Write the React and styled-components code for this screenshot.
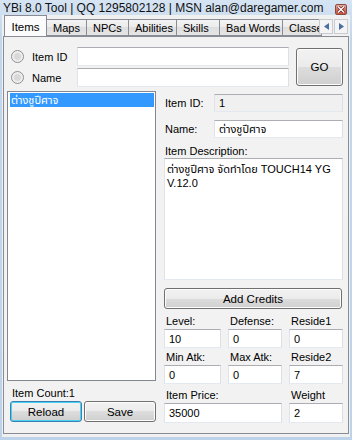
import React from 'react'
import styled, { createGlobalStyle } from 'styled-components'

const Global = createGlobalStyle`
  html, body { margin: 0; padding: 0; }
  body {
    width: 352px;
    height: 440px;
    overflow: hidden;
    font-family: "Liberation Sans", "Noto Sans", "Noto Sans Thai", "DejaVu Sans", sans-serif;
    font-size: 11px;
    color: #000;
  }
  * { box-sizing: border-box; }
`

const Window = styled.div`
  width: 352px;
  height: 440px;
  background: linear-gradient(#d6e4f3, #c2d7ec 40px, #bdd3ea);
  padding: 0 2px 3px 2px;
  display: flex;
  flex-direction: column;
`

const TitleBar = styled.div`
  height: 15px;
  display: flex;
  align-items: center;
  justify-content: space-between;
  padding-left: 1px;
  font-size: 12px;
  color: #111;
  white-space: nowrap;
`

const CloseBtn = styled.div`
  width: 12px;
  height: 11px;
  margin-right: 3px;
  margin-top: 3px;
  border: 1px solid #8a4a44;
  border-radius: 2px;
  background: linear-gradient(#e9a99c, #d46b5c 55%, #c9553f);
  display: flex;
  align-items: center;
  justify-content: center;
`

const Client = styled.div`
  flex: 1;
  background: #f0f0f0;
  padding: 0 1px 3px 1px;
  display: flex;
  flex-direction: column;
`

const TabStrip = styled.div`
  position: relative;
  height: 21px;
  display: flex;
  align-items: flex-end;
  padding-left: 2px;
  overflow: hidden;
  z-index: 1;
`

const Tab = styled.div`
  flex: 0 0 ${p => p.$w}px;
  height: ${p => (p.$active ? 22 : 17)}px;
  margin-bottom: ${p => (p.$active ? -1 : 0)}px;
  border: 1px solid #898c95;
  border-bottom: ${p => (p.$active ? 'none' : '1px solid #898c95')};
  margin-left: -1px;
  background: ${p => (p.$active ? '#fbfbfb' : 'linear-gradient(#f3f3f3, #ebebeb 50%, #dedede 50%, #e6e6e6)')};
  display: flex;
  align-items: center;
  justify-content: ${p => (p.$active ? 'center' : 'flex-start')};
  padding: 0 0 0 ${p => (p.$active ? 0 : 6)}px;
  font-size: ${p => (p.$active ? 11.5 : 11)}px;
  white-space: nowrap;
  overflow: hidden;
  position: relative;
  z-index: ${p => (p.$active ? 2 : 1)};
`

const Scroller = styled.div`
  position: absolute;
  right: 1px;
  top: 4px;
  display: flex;
  gap: 1px;
  z-index: 3;
`

const ScrollBtn = styled.div`
  width: 14px;
  height: 15px;
  border: 1px solid #c8ccd2;
  background: #f4f4f4;
  display: flex;
  align-items: center;
  justify-content: center;
`

const Panel = styled.div`
  flex: 1;
  border: 1px solid #898c95;
  background: #f2f2f2;
  padding: 10px 5px 0 3px;
  display: flex;
  flex-direction: column;
`

const TopRow = styled.div`
  display: flex;
  padding-left: 4px;
`

const SearchRows = styled.div`
  display: flex;
  flex-direction: column;
  gap: 2px;
`

const SearchRow = styled.div`
  display: flex;
  align-items: center;
  height: 19px;
`

const Radio = styled.span`
  width: 13px;
  height: 13px;
  border-radius: 50%;
  border: 1px solid #8f9091;
  background: radial-gradient(circle, #d9d9d9 0 3px, #ececec 4px, #f7f7f7);
  margin-right: 8px;
  flex: none;
`

const RadioLabel = styled.span`
  width: 45px;
`

const TextBox = styled.div`
  width: ${p => (p.$w ? `${p.$w}px` : '100%')};
  height: ${p => p.$h || 19}px;
  border: 1px solid;
  border-color: #abadb3 #dbdfe6 #e3e9ef #e2e3ea;
  background: ${p => (p.$disabled ? '#f0f0f0' : '#fff')};
  padding: 0 4px;
  display: flex;
  align-items: center;
  white-space: nowrap;
`

const Button = styled.div`
  width: ${p => (p.$w ? `${p.$w}px` : '100%')};
  height: ${p => p.$h || 21}px;
  border: 1px solid ${p => (p.$focus ? '#3c7fb1' : '#707070')};
  border-radius: 3px;
  box-shadow: inset 0 0 0 1px ${p => (p.$focus ? '#48d1f3' : '#fcfcfc')};
  background: linear-gradient(#f2f2f2, #ebebeb 50%, #dddddd 50%, #cfcfcf);
  display: flex;
  align-items: center;
  justify-content: center;
  font-size: 11.5px;
  flex: none;
`

const Main = styled.div`
  display: flex;
  gap: 8px;
  margin-top: 4px;
`

const LeftCol = styled.div`
  width: 150px;
  display: flex;
  flex-direction: column;
`

const ListBox = styled.div`
  height: 290px;
  border: 1px solid #828790;
  background: #fff;
  padding: 1px 1px;
`

const ListItem = styled.div`
  height: 14px;
  line-height: 14px;
  margin-left: 1px;
  padding-left: 1px;
  background: ${p => (p.$selected ? '#3399ff' : 'transparent')};
  color: ${p => (p.$selected ? '#fff' : '#000')};
`

const CountLabel = styled.div`
  height: 18px;
  display: flex;
  align-items: flex-end;
  padding-left: 5px;
`

const ButtonRow = styled.div`
  display: flex;
  gap: 2px;
  padding-left: 3px;
  margin-top: 2px;
`

const RightCol = styled.div`
  width: 179px;
  display: flex;
  flex-direction: column;
`

const FieldRow = styled.div`
  display: flex;
  align-items: center;
  margin-top: ${p => p.$mt || 0}px;
`

const FieldLabel = styled.span`
  width: 50px;
  padding-left: 1px;
`

const Caption = styled.div`
  height: 14px;
  margin-top: ${p => p.$mt || 0}px;
  padding-left: 1px;
  line-height: 14px;
`

const DescBox = styled.div`
  height: 122px;
  border: 1px solid;
  border-color: #abadb3 #dbdfe6 #e3e9ef #e2e3ea;
  background: #fff;
  padding: 3px 2px;
  line-height: 14px;
`

const StatsGrid = styled.div`
  display: grid;
  grid-template-columns: 57px 54px 54px;
  column-gap: 7px;
  grid-template-rows: 20px 19px 17px 19px 19px 20px;
`

const StatLabel = styled.div`
  grid-column: ${p => p.$span || 'auto'};
  align-self: end;
  padding-left: 2px;
  padding-bottom: 1px;
  line-height: 13px;
`

const StatInput = styled(TextBox)`
  grid-column: ${p => p.$span || 'auto'};
  height: 100%;
`

const tabs = [
  ['Items', 43],
  ['Maps', 41],
  ['NPCs', 43],
  ['Abilities', 49],
  ['Skills', 44],
  ['Bad Words', 64],
  ['Classes', 40],
]

const Arrow = ({ dir }) => (
  <svg width="5" height="7" viewBox="0 0 5 7">
    <polygon points={dir === 'left' ? '5,0 0,3.5 5,7' : '0,0 5,3.5 0,7'} fill="#4a6fa5" />
  </svg>
)

export default function App() {
  return (
    <>
      <Global />
      <Window>
        <TitleBar>
          <span>YBi 8.0 Tool | QQ 1295802128 | MSN alan@daregamer.com</span>
          <CloseBtn>
            <svg width="8" height="7" viewBox="0 0 8 7">
              <path d="M1 0.5 L7 6.5 M7 0.5 L1 6.5" stroke="#5a2620" strokeWidth="2.6" />
              <path d="M1 0.5 L7 6.5 M7 0.5 L1 6.5" stroke="#fff" strokeWidth="1.4" />
            </svg>
          </CloseBtn>
        </TitleBar>
        <Client>
          <TabStrip>
            {tabs.map(([t, w], i) => (
              <Tab key={t} $w={w} $active={i === 0}>{t}</Tab>
            ))}
            <Scroller>
              <ScrollBtn><Arrow dir="left" /></ScrollBtn>
              <ScrollBtn><Arrow dir="right" /></ScrollBtn>
            </Scroller>
          </TabStrip>
          <Panel>
            <TopRow>
              <SearchRows>
                <SearchRow>
                  <Radio />
                  <RadioLabel>Item ID</RadioLabel>
                  <TextBox $w={212} />
                </SearchRow>
                <SearchRow>
                  <Radio />
                  <RadioLabel>Name</RadioLabel>
                  <TextBox $w={212} />
                </SearchRow>
              </SearchRows>
              <Button $w={47} $h={38} style={{ marginLeft: 7, marginTop: 1 }}>GO</Button>
            </TopRow>
            <Main>
              <LeftCol>
                <ListBox>
                  <ListItem $selected>ต่างชูปีศาจ</ListItem>
                </ListBox>
                <CountLabel>Item Count:1</CountLabel>
                <ButtonRow>
                  <Button $w={72} $focus>Reload</Button>
                  <Button $w={72}>Save</Button>
                </ButtonRow>
              </LeftCol>
              <RightCol>
                <FieldRow $mt={3}>
                  <FieldLabel>Item ID:</FieldLabel>
                  <TextBox $w={129} $h={18} $disabled>1</TextBox>
                </FieldRow>
                <FieldRow $mt={8}>
                  <FieldLabel>Name:</FieldLabel>
                  <TextBox $w={129} $h={18}>ต่างชูปีศาจ</TextBox>
                </FieldRow>
                <Caption $mt={6}>Item Description:</Caption>
                <DescBox>
                  ต่างชูปีศาจ จัดทำโดย TOUCH14 YG<br />V.12.0
                </DescBox>
                <Button $h={21} style={{ marginTop: 8, width: 178 }}>Add Credits</Button>
                <StatsGrid>
                  <StatLabel>Level:</StatLabel>
                  <StatLabel>Defense:</StatLabel>
                  <StatLabel>Reside1</StatLabel>
                  <StatInput>10</StatInput>
                  <StatInput>0</StatInput>
                  <StatInput>0</StatInput>
                  <StatLabel>Min Atk:</StatLabel>
                  <StatLabel>Max Atk:</StatLabel>
                  <StatLabel>Reside2</StatLabel>
                  <StatInput>0</StatInput>
                  <StatInput>0</StatInput>
                  <StatInput>7</StatInput>
                  <StatLabel $span="1 / span 2">Item Price:</StatLabel>
                  <StatLabel>Weight</StatLabel>
                  <StatInput $span="1 / span 2">35000</StatInput>
                  <StatInput>2</StatInput>
                </StatsGrid>
              </RightCol>
            </Main>
          </Panel>
        </Client>
      </Window>
    </>
  )
}
